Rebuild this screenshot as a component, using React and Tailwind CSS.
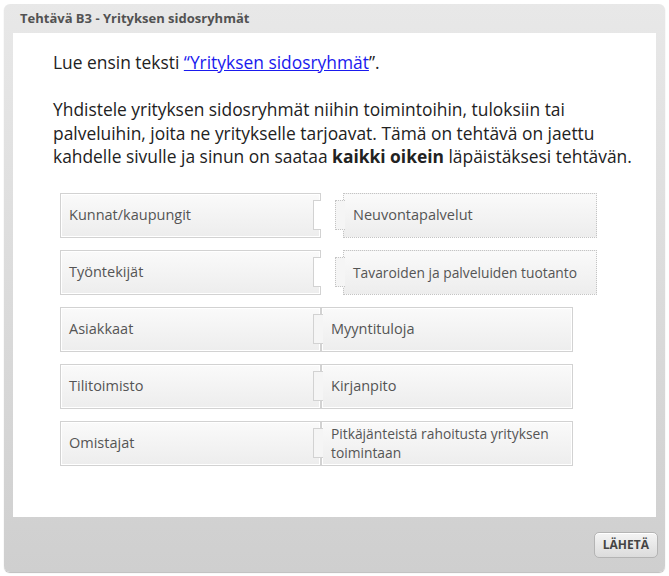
const font = { fontFamily: '"Open Sans", "Noto Sans", sans-serif' };

const rows = [
  { left: 'Kunnat/kaupungit', right: 'Neuvontapalvelut', matched: false },
  { left: 'Työntekijät', right: 'Tavaroiden ja palveluiden tuotanto', matched: false, small: true },
  { left: 'Asiakkaat', right: 'Myyntituloja', matched: true },
  { left: 'Tilitoimisto', right: 'Kirjanpito', matched: true },
  { left: 'Omistajat', right: 'Pitkäjänteistä rahoitusta yrityksen toimintaan', matched: true, small: true },
];

const LeftPiece = ({ text }) => (
  <div className="relative w-[261px] h-[45px] shrink-0 border border-[#d2d2d2] bg-gradient-to-b from-[#fafafa] to-[#ededed] shadow-[inset_0_0_0_1px_#ffffff] flex items-center pl-[8px]">
    <span className="text-[14.5px] text-[#555]">{text}</span>
    <div className="absolute right-[-1px] top-[6px] w-[8px] h-[30px] bg-white border-y border-l border-[#d2d2d2]" />
  </div>
);

const RightPiece = ({ text, matched, small }) => (
  <div
    className={
      'relative h-[45px] shrink-0 bg-gradient-to-b from-[#fafafa] to-[#ededed] flex items-center pl-[9px] pr-2 ' +
      (matched
        ? 'w-[252px] border border-[#d2d2d2] shadow-[inset_0_0_0_1px_#ffffff]'
        : 'ml-[22px] w-[254px] border border-dotted border-[#c4c4c4]')
    }
  >
    <div
      className={
        'absolute top-[6px] h-[30px] bg-[#f5f5f5] border-y border-l ' +
        (matched
          ? 'left-[-9px] w-[10px] border-[#d2d2d2]'
          : 'left-[-9px] w-[10px] border-dotted border-[#c4c4c4]')
      }
    />
    <span className={(small ? 'text-[13.8px] leading-[19px]' : 'text-[14.5px]') + ' relative text-[#555]'}>{text}</span>
  </div>
);

export default function App() {
  return (
    <div className="w-[669px] h-[576px] bg-white pt-[4px] px-[4px]" style={font}>
      <div className="w-[661px] h-[568px] rounded-[6px] bg-gradient-to-b from-[#e8e8e8] to-[#cfcfcf] shadow-[0_1px_1px_#bdbdbd] flex flex-col">
        <div className="h-[29px] flex items-center pl-[16px] pt-[1px]">
          <span className="text-[13px] font-bold text-[#525252]">Tehtävä B3 - Yrityksen sidosryhmät</span>
        </div>
        <div className="mx-[9px] h-[484px] bg-white pt-[18px] pl-[40px]">
          <div className="w-[592px] text-[17.4px] leading-[23.5px] text-[#222]">
            <p>
              Lue ensin teksti{' '}
              <a href="#" className="text-[#1a1aee] underline">“Yrityksen sidosryhmät</a>”.
            </p>
            <p className="mt-[23.5px]">
              Yhdistele yrityksen sidosryhmät niihin toimintoihin, tuloksiin tai palveluihin, joita ne yritykselle
              tarjoavat. Tämä on tehtävä on jaettu kahdelle sivulle ja sinun on saataa <b>kaikki oikein</b> läpäistäksesi
              tehtävän.
            </p>
          </div>
          <div className="mt-[24px] ml-[7px] flex flex-col gap-[12px]">
            {rows.map((r) => (
              <div key={r.left} className="flex">
                <LeftPiece text={r.left} />
                <RightPiece text={r.right} matched={r.matched} small={r.small} />
              </div>
            ))}
          </div>
        </div>
        <div className="flex-1 flex items-center justify-end pr-[7px]">
          <button className="h-[26px] px-[8px] rounded-[5px] border border-[#b4b4b4] bg-gradient-to-b from-[#f4f4f4] to-[#dcdcdc] shadow-[inset_0_1px_0_#ffffff] text-[12px] font-bold text-[#444]">
            LÄHETÄ
          </button>
        </div>
      </div>
    </div>
  );
}
